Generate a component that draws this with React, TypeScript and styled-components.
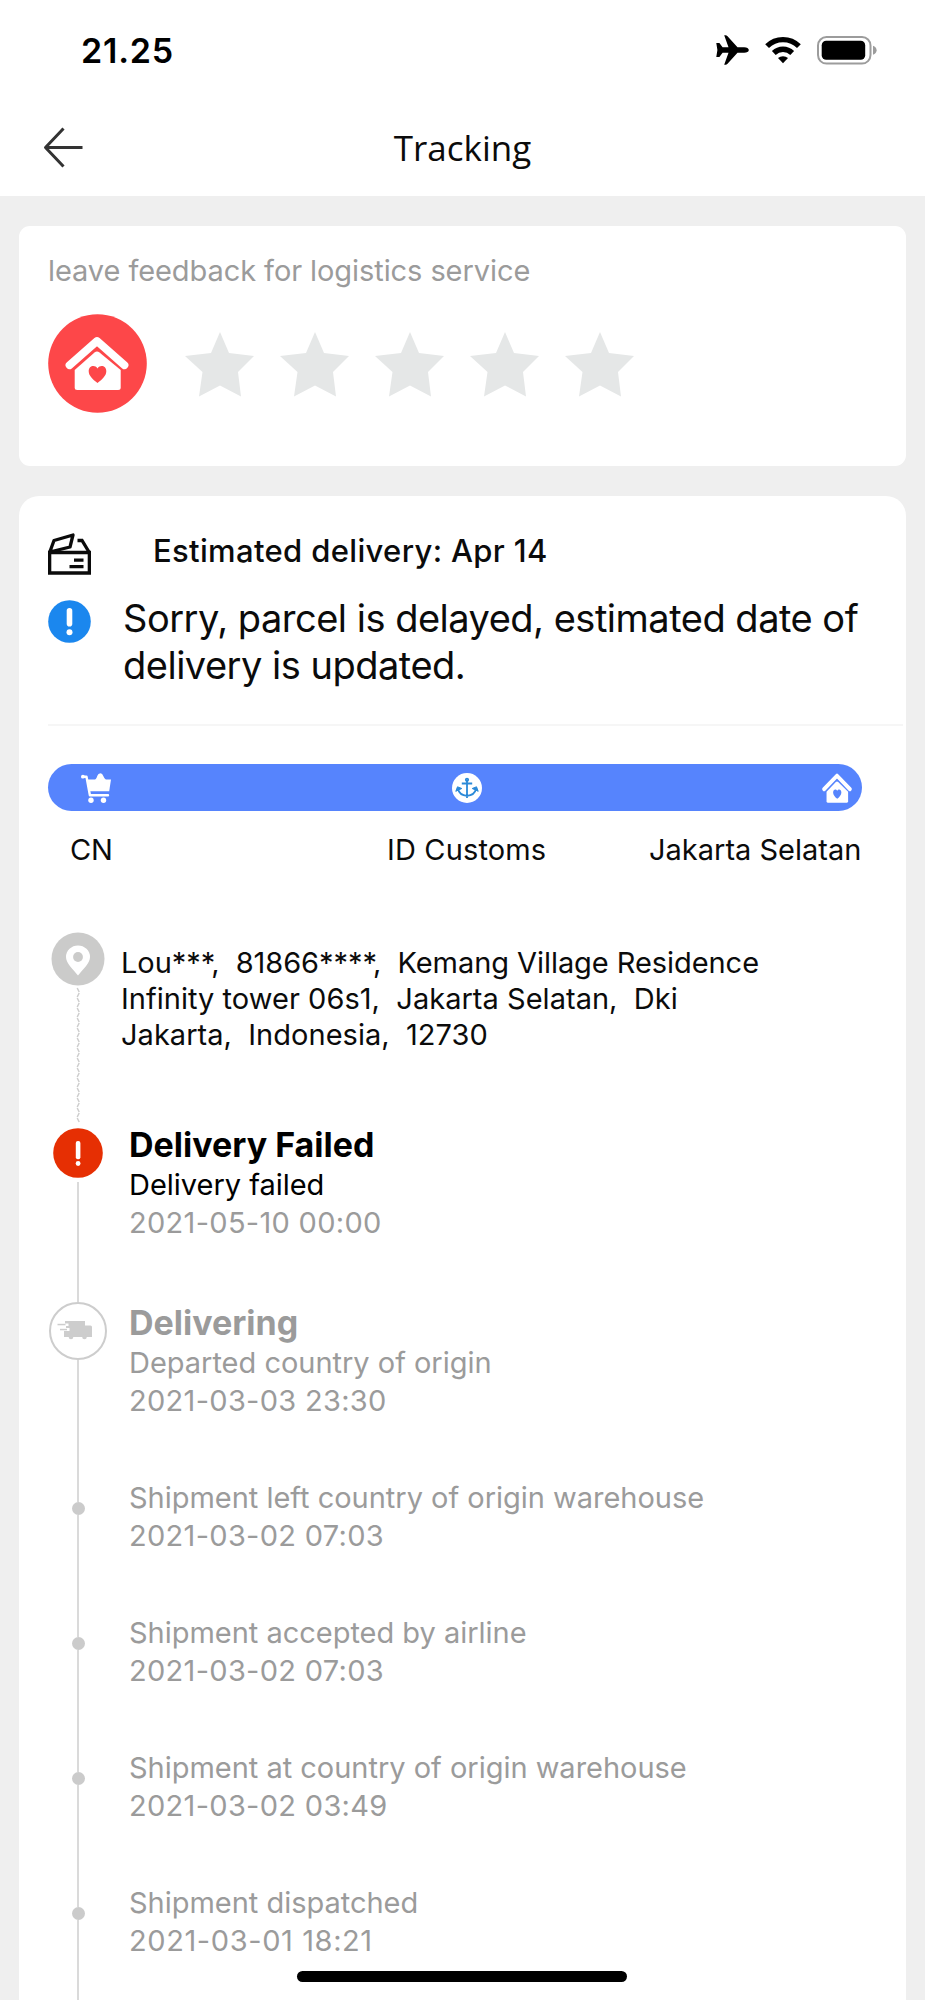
import React from 'react';
import styled, { createGlobalStyle } from 'styled-components';

const GlobalStyle = createGlobalStyle`
  * { box-sizing: border-box; }
  body { margin: 0; background: #efefef; }
  svg { display: block; flex: none; }
`;

const Screen = styled.div`
  position: relative;
  width: 925px;
  height: 2000px;
  overflow: hidden;
  background: #efefef;
  color: #0b0b0b;
  font-family: Inter, "Liberation Sans", sans-serif;
`;

const StatusBar = styled.div`
  display: flex;
  align-items: center;
  justify-content: space-between;
  height: 101px;
  padding: 0 48px 0 81px;
  background: #fff;
`;

const Clock = styled.div`
  font-size: 34px;
  font-weight: 600;
  line-height: 40px;
  letter-spacing: 0.8px;
  color: #000;
`;

const StatusIcons = styled.div`
  display: flex;
  align-items: center;
  gap: 16px;
  padding-bottom: 1px;
`;

const Header = styled.header`
  display: grid;
  grid-template-columns: 44px 1fr 44px;
  align-items: center;
  height: 95px;
  padding: 0 43px 2px;
  background: #fff;
`;

const Title = styled.h1`
  margin: 0;
  text-align: center;
  font-family: "Open Sans", sans-serif;
  font-size: 35px;
  font-weight: 400;
  line-height: 48px;
`;

const Content = styled.main`
  display: flex;
  flex-direction: column;
  gap: 30px;
  padding: 30px 19px 0 19px;
`;

const FeedbackCard = styled.section`
  height: 240px;
  padding: 26px 29px;
  border-radius: 11px;
  background: #fff;
`;

const FeedbackLabel = styled.div`
  font-size: 29px;
  line-height: 37px;
  letter-spacing: -0.08px;
  color: #9b9b9b;
`;

const RatingRow = styled.div`
  display: flex;
  align-items: center;
  margin-top: 25px;
`;

const Stars = styled.div`
  display: flex;
  gap: 26px;
  margin: 2px 0 0 38px;
`;

const TrackingCard = styled.section`
  height: 1520px;
  padding: 37px 3px 0 29px;
  border-radius: 20px 20px 0 0;
  background: #fff;
`;

const EstimateRow = styled.div`
  display: flex;
  gap: 62px;
  height: 42px;
`;

const Estimate = styled.div`
  font-size: 31px;
  font-weight: 500;
  line-height: 36px;
  letter-spacing: 0.34px;
`;

const NoticeRow = styled.div`
  display: flex;
  gap: 32px;
  margin-top: 20px;
  svg { margin-top: 5px; }
`;

const Notice = styled.p`
  margin: 0;
  font-size: 38px;
  line-height: 46.7px;
  letter-spacing: -0.5px;
  white-space: nowrap;
`;

const Divider = styled.div`
  height: 2px;
  margin-top: 35.6px;
  background: #f6f6f6;
`;

const RouteBar = styled.div`
  display: flex;
  align-items: center;
  justify-content: space-between;
  width: 814px;
  height: 47px;
  margin-top: 38px;
  padding: 0 10px 0 33px;
  border-radius: 24px;
  background: #5684fd;
`;

const RouteLabels = styled.div`
  display: grid;
  grid-template-columns: 317px 262px auto;
  margin-top: 20.5px;
  padding-left: 22px;
  font-size: 29px;
  line-height: 36px;
  white-space: nowrap;
`;

const RouteLabel = styled.div<{ $spacing: number }>`
  letter-spacing: ${(p) => p.$spacing}px;
`;

const Timeline = styled.div`
  margin: 64.5px 0 0 1px;
`;

const Step = styled.div<{ $height: number }>`
  display: grid;
  grid-template-columns: 58px 1fr;
  height: ${(p) => p.$height}px;
`;

const Rail = styled.div<{ $top?: number }>`
  display: flex;
  flex-direction: column;
  align-items: center;
  padding-top: ${(p) => p.$top ?? 0}px;
`;

const Line = styled.div<{ $length?: number; $gap?: number }>`
  width: 2px;
  flex: ${(p) => (p.$length ? `0 0 ${p.$length}px` : '1')};
  margin-top: ${(p) => p.$gap ?? 0}px;
  background: #dadada;
`;

const Dot = styled.div`
  flex: none;
  width: 13px;
  height: 13px;
  border-radius: 50%;
  background: #cbcbcb;
`;

const Address = styled.div`
  padding: 13px 0 0 14px;
  font-size: 29px;
  line-height: 35.8px;
  white-space: pre;
`;

const AddressLine = styled.div<{ $spacing: number }>`
  letter-spacing: ${(p) => p.$spacing}px;
`;

const Details = styled.div<{ $muted?: boolean }>`
  padding-left: 22px;
  color: ${(p) => (p.$muted ? '#9b9b9b' : '#000')};
  white-space: nowrap;
`;

const StepTitle = styled.div`
  font-size: 34px;
  font-weight: 700;
  line-height: 41.5px;
`;

const StepText = styled.div`
  padding-top: 1px;
  font-size: 29px;
  line-height: 38px;
  letter-spacing: -0.02px;
`;

const StepDate = styled.div<{ $spacing?: number }>`
  font-size: 29px;
  line-height: 38px;
  letter-spacing: ${(p) => p.$spacing ?? 0.3}px;
  color: #9b9b9b;
`;

const HomeIndicator = styled.div`
  position: absolute;
  left: 297px;
  bottom: 18px;
  width: 330px;
  height: 11px;
  border-radius: 6px;
  background: #000;
`;

const PlaneIcon = () => (
  <svg width="33" height="30" viewBox="0 0 33 30">
    <path d="M32.8 15c0 1.7-2 2.8-4.6 2.8h-6.7L11.3 29q-.7.8-1.7.8H8.2l4.3-12H6.6L3.4 22H.3l1.1-7L.3 8h3.1l3.2 4.2h5.9L8.2.2h1.4q1 0 1.7.8l10.2 11.2h6.7c2.6 0 4.6 1.1 4.6 2.8z" />
  </svg>
);

const WifiIcon = () => (
  <svg width="36" height="28" viewBox="0 0 36 28" fill="none" stroke="#000" strokeWidth="5.4">
    <path d="M2.1 10.2a22.6 22.6 0 0 1 31.8 0" />
    <path d="M8.8 17a13.2 13.2 0 0 1 18.4 0" />
    <path d="M18 27.3l-5-5.2a7.4 7.4 0 0 1 10 0z" fill="#000" stroke="none" />
  </svg>
);

const BatteryIcon = () => (
  <svg width="60" height="29" viewBox="0 0 60 29">
    <rect x="1" y="1" width="52.5" height="26.6" rx="8.5" fill="none" stroke="#9c9c9c" strokeWidth="2" />
    <rect x="4.7" y="4.8" width="43.5" height="19" rx="4.5" />
    <path d="M56 9.8c2.2.6 3.6 2.3 3.6 4.5s-1.4 3.9-3.6 4.5z" fill="#9c9c9c" />
  </svg>
);

const BackIcon = () => (
  <svg width="42" height="42" viewBox="0 0 42 42" fill="none" stroke="#333" strokeWidth="3">
    <path d="M20.500 1.500L2.500 20.500L20.500 39.500M2.500 20.500H39.500" strokeLinejoin="round" />
  </svg>
);

const HouseShape = ({ heart }: { heart: string }) => (
  <>
    <path d="M21.500 51.200L49 27L76.500 51.200" fill="none" stroke="#fff" strokeWidth="7.8" strokeLinecap="round" strokeLinejoin="round" />
    <path d="M46.500 38.500q2.500-1.800 5 0L72.700 56v17.500q0 2.500-2.500 2.500h-41q-2.500 0-2.500-2.500V56z" fill="#fff" />
    <path d="M49.500 69c-5-4-8.800-7.400-8.800-11.800 0-5.400 6-7 8.800-2.800 2.800-4.200 8.800-2.600 8.800 2.800 0 4.400-3.800 7.800-8.800 11.800z" fill={heart} />
  </>
);

const HomeBadge = () => (
  <svg width="99" height="99" viewBox="0 0 99 99">
    <circle cx="49.500" cy="49.500" r="49.300" fill="#fd4749" />
    <HouseShape heart="#fd4749" />
  </svg>
);

const HomeIcon = () => (
  <svg width="30" height="30" viewBox="17 22 64 54.500" preserveAspectRatio="none">
    <HouseShape heart="#5684fd" />
  </svg>
);

const StarIcon = () => (
  <svg width="69" height="65" viewBox="0 0 69 65">
    <path d="M35 0L44 21L69 24L53 40L56 64.500L35 53.500L14 64.500L17.500 40L0 24L26 21Z" fill="#e5e7e7" />
  </svg>
);

const ParcelIcon = () => (
  <svg width="43" height="42" viewBox="0 0 43 42" fill="none" stroke="#0b0b0b" strokeWidth="3.300">
    <path d="M1.650 19.500H41.350V40H1.650Z" />
    <path d="M1.800 19L6 7.500L25 2L22 14Z" strokeLinejoin="round" />
    <path d="M29.500 7.500H34L41.300 19.500" />
    <path d="M26 27.200H35.500M21.500 33.700H35.500" />
  </svg>
);

const NoticeIcon = () => (
  <svg width="43" height="43" viewBox="0 0 43 43">
    <circle cx="21.500" cy="21.500" r="21.300" fill="#1b87ee" />
    <rect x="18.700" y="8" width="5.600" height="18.500" rx="2.800" fill="#fff" />
    <circle cx="21.500" cy="32.300" r="3" fill="#fff" />
  </svg>
);

const CartIcon = () => (
  <svg width="30" height="30" viewBox="0 0 30 30" fill="#fff">
    <path d="M6 6.500H30L28.200 18.300H8.200Z" />
    <path d="M14 7q2-2.500 2.500-4.500 .5-1.800 3-2.200 2 .5 2.500 2.200 .8 2 3 4.500z" />
    <path d="M1.800 3.800H5.500L8.900 22.300H27" fill="none" stroke="#fff" strokeWidth="2.400" strokeLinejoin="round" strokeLinecap="round" />
    <circle cx="1.900" cy="3.700" r="1.900" />
    <circle cx="10" cy="27.200" r="2.700" />
    <circle cx="22.500" cy="27.200" r="2.700" />
  </svg>
);

const AnchorIcon = () => (
  <svg width="30" height="30" viewBox="0 0 30 30" fill="none" stroke="#2b8ad8" strokeWidth="1.800">
    <circle cx="15" cy="15" r="15" fill="#fff" stroke="none" />
    <circle cx="15" cy="6.800" r="1.200" />
    <path d="M15 8V25M9.800 10.500H20.200M5.800 15.500Q7.500 22.500 15 22.800Q22.500 22.500 24.200 15.500" />
    <path d="M3.800 18.300L5.500 13.800L9.800 15.500ZM26.200 18.300L24.500 13.800L20.200 15.500Z" fill="#2b8ad8" strokeWidth="1" strokeLinejoin="round" />
  </svg>
);

const PinIcon = () => (
  <svg width="54" height="54" viewBox="0 0 54 54">
    <circle cx="27" cy="27" r="26.500" fill="#cbcbca" />
    <path d="M27 43.500C21.500 36.500 15 31 15 25a12 11.500 0 0 1 24 0C39 31 32.500 36.500 27 43.500z" fill="#fff" />
    <circle cx="27" cy="25" r="4.900" fill="#cbcbca" />
  </svg>
);

const FailedIcon = () => (
  <svg width="50" height="50" viewBox="0 0 50 50">
    <circle cx="25" cy="25" r="24.800" fill="#e62f03" />
    <rect x="22.800" y="13" width="4.600" height="18.300" rx="2" fill="#fff" />
    <circle cx="25.100" cy="35.500" r="2.400" fill="#fff" />
  </svg>
);

const TruckIcon = () => (
  <svg width="60" height="58" viewBox="0 0 60 58">
    <circle cx="30" cy="29" r="28" fill="#fff" stroke="#cdcdcd" strokeWidth="2" />
    <g fill="#cdcdcd">
      <path d="M17 19H37V23.500H42.500q1.500 0 1.500 1.500V35H16V29H21.500V26H18V24H20.500V21.500H17Z" />
      <rect x="9.500" y="21.800" width="8" height="1.500" />
      <rect x="12" y="26.800" width="7" height="1.500" />
      <circle cx="23" cy="35" r="2.300" />
      <circle cx="36.500" cy="35" r="2.300" />
    </g>
  </svg>
);

const DashedLine = () => (
  <svg width="6" height="138" viewBox="0 -2 6 138">
    <path
      d={Array.from({ length: 27 }, (_, i) => (i % 2 ? `M4.200 ${i * 5}l-2 4` : `M2.200 ${i * 5}l2 4`)).join('')}
      fill="none"
      stroke="#cdcdcd"
      strokeWidth="1.500"
    />
  </svg>
);

const addressLines = [
  { text: 'Lou***,  81866****,  Kemang Village Residence', spacing: -0.06 },
  { text: 'Infinity tower 06s1,  Jakarta Selatan,  Dki', spacing: 0.03 },
  { text: 'Jakarta,  Indonesia,  12730', spacing: 0.03 },
];

const events = [
  { text: 'Shipment left country of origin warehouse', date: '2021-03-02 07:03' },
  { text: 'Shipment accepted by airline', date: '2021-03-02 07:03' },
  { text: 'Shipment at country of origin warehouse', date: '2021-03-02 03:49' },
  { text: 'Shipment dispatched', date: '2021-03-01 18:21', spacing: 0.6 },
];

export default function App() {
  return (
    <Screen>
      <GlobalStyle />
      <StatusBar>
        <Clock>21.25</Clock>
        <StatusIcons>
          <PlaneIcon />
          <WifiIcon />
          <BatteryIcon />
        </StatusIcons>
      </StatusBar>
      <Header>
        <BackIcon />
        <Title>Tracking</Title>
      </Header>
      <Content>
        <FeedbackCard>
          <FeedbackLabel>leave feedback for logistics service</FeedbackLabel>
          <RatingRow>
            <HomeBadge />
            <Stars>
              {[1, 2, 3, 4, 5].map((n) => (
                <StarIcon key={n} />
              ))}
            </Stars>
          </RatingRow>
        </FeedbackCard>
        <TrackingCard>
          <EstimateRow>
            <ParcelIcon />
            <Estimate>Estimated delivery: Apr 14</Estimate>
          </EstimateRow>
          <NoticeRow>
            <NoticeIcon />
            <Notice>
              Sorry, parcel is delayed, estimated date of
              <br />
              delivery is updated.
            </Notice>
          </NoticeRow>
          <Divider />
          <RouteBar>
            <CartIcon />
            <AnchorIcon />
            <HomeIcon />
          </RouteBar>
          <RouteLabels>
            <RouteLabel $spacing={-0.1}>CN</RouteLabel>
            <RouteLabel $spacing={0.15}>ID Customs</RouteLabel>
            <RouteLabel $spacing={0}>Jakarta Selatan</RouteLabel>
          </RouteLabels>
          <Timeline>
            <Step $height={191.5}>
              <Rail>
                <PinIcon />
                <DashedLine />
              </Rail>
              <Address>
                {addressLines.map((line) => (
                  <AddressLine key={line.text} $spacing={line.spacing}>
                    {line.text}
                  </AddressLine>
                ))}
              </Address>
            </Step>
            <Step $height={178}>
              <Rail $top={4}>
                <FailedIcon />
                <Line $gap={4} />
              </Rail>
              <Details>
                <StepTitle>Delivery Failed</StepTitle>
                <StepText>Delivery failed</StepText>
                <StepDate>2021-05-10 00:00</StepDate>
              </Details>
            </Step>
            <Step $height={176.3}>
              <Rail>
                <TruckIcon />
                <Line />
              </Rail>
              <Details $muted>
                <StepTitle>Delivering</StepTitle>
                <StepText>Departed country of origin</StepText>
                <StepDate>2021-03-03 23:30</StepDate>
              </Details>
            </Step>
            {events.map((event) => (
              <Step key={event.date + event.text} $height={135.2}>
                <Rail>
                  <Line $length={24} />
                  <Dot />
                  <Line />
                </Rail>
                <Details $muted>
                  <StepText>{event.text}</StepText>
                  <StepDate $spacing={event.spacing}>{event.date}</StepDate>
                </Details>
              </Step>
            ))}
          </Timeline>
        </TrackingCard>
      </Content>
      <HomeIndicator />
    </Screen>
  );
}
